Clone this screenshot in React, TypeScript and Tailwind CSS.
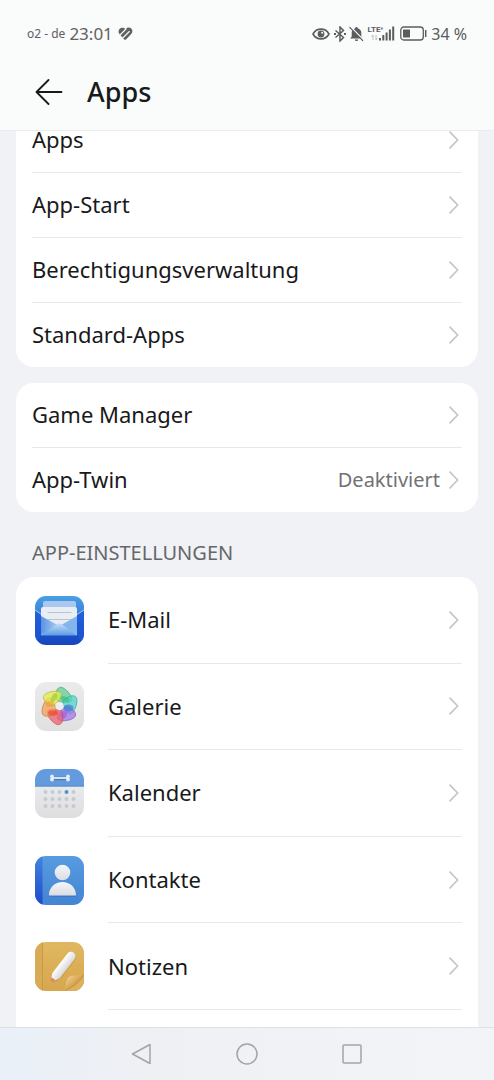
import type { ReactNode } from "react";

function Chevron() {
  return (
    <svg viewBox="0 0 10 18" className="h-[18px] w-[10px] shrink-0" fill="none" stroke="#c4c5c7" strokeWidth="1.7" strokeLinecap="round" strokeLinejoin="round" aria-hidden="true">
      <path d="M1 1.2 8.7 9 1 16.8" />
    </svg>
  );
}

function MailIcon() {
  return (
    <svg viewBox="0 0 49 49" className="size-[49px] shrink-0" aria-hidden="true">
      <defs>
        <linearGradient id="mailBg" x1="0" y1="0" x2="0" y2="1">
          <stop offset="0" stopColor="#4a9fe2" />
          <stop offset=".3" stopColor="#3c88e0" />
          <stop offset=".6" stopColor="#1d58d6" />
          <stop offset="1" stopColor="#1745bd" />
        </linearGradient>
        <linearGradient id="mailFront" x1="0" y1="0" x2="0" y2="1">
          <stop offset="0" stopColor="#c6e0f6" />
          <stop offset="1" stopColor="#5b9be4" />
        </linearGradient>
        <linearGradient id="mailSide" x1="0" y1="0" x2="1" y2="0">
          <stop offset="0" stopColor="#3f83e0" />
          <stop offset="1" stopColor="#a5cdf3" />
        </linearGradient>
        <clipPath id="mailClip"><rect width="49" height="49" rx="11" /></clipPath>
      </defs>
      <g clipPath="url(#mailClip)">
        <rect width="49" height="49" fill="url(#mailBg)" />
        <rect x="8" y="5" width="33" height="20" rx="2" fill="#a9c8ef" />
        <path d="M6 13a2 2 0 0 1 2-2h32a2 2 0 0 1 2 2v26H6z" fill="#e9edf4" />
        <path d="M12.5 16.500h24M12.5 23.500h24" stroke="#bcc3ce" strokeWidth="1" />
        <path d="M6 20 24.500 30 6 39z" fill="url(#mailSide)" opacity=".85" />
        <path d="M42 20 24.500 30 42 39z" fill="#6faae9" opacity=".85" />
        <path d="M6 39.500 22.500 28q2-1.500 4 0L42 39.500z" fill="url(#mailFront)" />
        <path d="M0 14l6 4.500V39L0 49zM49 14l-7 4.500V39l7 10z" fill="#1f58d5" opacity=".75" />
        <path d="M0 14 6 18M49 14l-7 4.500" stroke="#a5c9f5" strokeWidth="1" />
      </g>
    </svg>
  );
}

const petals = [
  { color: "#62cf91", edge: "#3da476", angle: 0 },
  { color: "#52d3c5", edge: "#35afa5", angle: 60 },
  { color: "#a775e7", edge: "#8460b7", angle: 120 },
  { color: "#f0606a", edge: "#c84d56", angle: 180 },
  { color: "#f3a05b", edge: "#cb813d", angle: 240 },
  { color: "#e2ec4a", edge: "#b7b93a", angle: 300 },
];

function GalleryIcon() {
  return (
    <svg viewBox="0 0 49 49" className="size-[49px] shrink-0" aria-hidden="true">
      <defs>
        <linearGradient id="galBg" x1="0" y1="0" x2="0" y2="1">
          <stop offset="0" stopColor="#ebebec" />
          <stop offset="1" stopColor="#e0e0e1" />
        </linearGradient>
      </defs>
      <rect width="49" height="49" rx="11" fill="url(#galBg)" />
      {petals.map((p) => (
        <path key={p.angle} transform={`rotate(${p.angle} 24.5 24)`} d="M21.5 17.500C20.500 12 21 8 23.500 6c2.500-2 6.500.5 9.500 4s5 7.500 3 9.500-9 1-12.500-.2z" fill={p.color} fillOpacity=".75" stroke={p.edge} strokeWidth=".7" />
      ))}
      <ellipse cx="19" cy="15.500" rx="2.500" ry="4.500" transform="rotate(25 19 15.500)" fill="#9ac52e" opacity=".6" />
      <ellipse cx="30" cy="17" rx="4.500" ry="2.500" transform="rotate(20 30 17)" fill="#35bd7a" opacity=".6" />
      <ellipse cx="33.500" cy="26" rx="5" ry="3.500" fill="#427bdc" opacity=".7" />
      <ellipse cx="29" cy="32.500" rx="3" ry="4" transform="rotate(20 29 32.500)" fill="#9b4fd4" opacity=".5" />
      <ellipse cx="18" cy="31" rx="5" ry="2.800" fill="#ed3f34" opacity=".65" />
      <ellipse cx="14.500" cy="22" rx="4" ry="3" fill="#ee982f" opacity=".5" />
      <path d="m24.500 19.500 4 2.300v4.400l-4 2.300-4-2.300v-4.400z" fill="#edf0ef" opacity=".85" />
    </svg>
  );
}

function CalendarIcon() {
  return (
    <svg viewBox="0 0 49 49" className="size-[49px] shrink-0" aria-hidden="true">
      <defs>
        <linearGradient id="calBg" x1="0" y1="0" x2="0" y2="1">
          <stop offset=".35" stopColor="#e9eaec" />
          <stop offset="1" stopColor="#dededf" />
        </linearGradient>
        <clipPath id="calClip"><rect width="49" height="49" rx="11" /></clipPath>
      </defs>
      <g clipPath="url(#calClip)">
        <rect width="49" height="49" fill="url(#calBg)" />
        <rect width="49" height="17.500" fill="#649bdf" />
        <rect y="16.500" width="49" height="1" fill="#588bc9" />
      </g>
      <path d="M17 9.500h16" stroke="#4d79ad" strokeWidth="3.500" />
      <circle cx="17" cy="7.500" r="1.900" fill="#e6edf6" /><circle cx="17" cy="10.500" r="1.900" fill="#e6edf6" />
      <circle cx="33" cy="7.500" r="1.900" fill="#e6edf6" /><circle cx="33" cy="10.500" r="1.900" fill="#e6edf6" />
      <path d="M17 9h16" stroke="#e6edf6" strokeWidth="1.800" />
      {[23, 30, 37].map((y) =>
        [10.5, 17.5, 24.5, 31.5, 38.5].map((x) => (
          <circle key={`${x}-${y}`} cx={x} cy={y} r="2" fill={x === 31.5 && y === 23 ? "#568fcd" : "#c5cad2"} />
        )),
      )}
    </svg>
  );
}

function ContactsIcon() {
  return (
    <svg viewBox="0 0 49 49" className="size-[49px] shrink-0" aria-hidden="true">
      <defs>
        <linearGradient id="conBg" x1="0" y1="0" x2="0" y2="1">
          <stop offset="0" stopColor="#579be0" />
          <stop offset="1" stopColor="#4484d3" />
        </linearGradient>
        <linearGradient id="conSpine" x1="0" y1="0" x2="0" y2="1">
          <stop offset="0" stopColor="#4186df" />
          <stop offset="1" stopColor="#1e49cd" />
        </linearGradient>
        <linearGradient id="conMan" x1="0" y1="0" x2="0" y2="1">
          <stop offset="0" stopColor="#f5f6f8" />
          <stop offset="1" stopColor="#dadde3" />
        </linearGradient>
        <clipPath id="conClip"><rect width="49" height="49" rx="11" /></clipPath>
      </defs>
      <g clipPath="url(#conClip)">
        <rect width="49" height="49" fill="url(#conBg)" />
        <rect width="7.500" height="49" fill="url(#conSpine)" />
        <path d="M14 39.500h27v1.500H14z" fill="#3569b4" opacity=".5" />
      </g>
      <circle cx="27.500" cy="16.500" r="7.800" fill="url(#conMan)" />
      <path d="M14.500 39.500c-.5 0-.7-.4-.6-1C14.500 31 20 26 27.500 26s13 5 13.500 12.500c0 .6-.2 1-.7 1z" fill="url(#conMan)" />
    </svg>
  );
}

function NotesIcon() {
  return (
    <svg viewBox="0 0 49 49" className="size-[49px] shrink-0" aria-hidden="true">
      <defs>
        <linearGradient id="noteBg" x1="0" y1="0" x2="0" y2="1">
          <stop offset="0" stopColor="#e0b760" />
          <stop offset="1" stopColor="#d7a74e" />
        </linearGradient>
        <linearGradient id="noteFold" x1="0" y1="0" x2="1" y2="1">
          <stop offset=".1" stopColor="#f5d495" />
          <stop offset=".6" stopColor="#d09a47" />
        </linearGradient>
        <linearGradient id="notePen" x1="0" y1="0" x2="1" y2="0">
          <stop offset="0" stopColor="#ffffff" />
          <stop offset="1" stopColor="#d8d8dc" />
        </linearGradient>
        <clipPath id="noteClip"><rect width="49" height="49" rx="11" /></clipPath>
      </defs>
      <g clipPath="url(#noteClip)">
        <rect width="49" height="49" fill="url(#noteBg)" />
        <rect width="7" height="49" fill="#d9ab55" />
        <path d="M7.500 0v49" stroke="#c89a47" strokeWidth="1" />
        <path d="M30 49c1-3 0-9 3-13 3-4 9-1 16-4v17z" fill="url(#noteFold)" />
        <path d="M30 49C36 46 44 41 49 33v16z" fill="#dcb05d" />
        <path d="M30 48.500C36 46 44 41 48.500 33" stroke="#c08a3c" strokeWidth=".8" fill="none" />
      </g>
      <g transform="translate(-.5 1.5) rotate(38 27 25)">
        <path d="M24 10a4.500 4.500 0 0 1 9 0V33l-3.200 8.500h-1.600L24 33z" fill="#bd8e3d" opacity=".35" />
        <path d="M22.500 9.500a4.500 4.500 0 0 1 9 0v23q0 2-1 3.500l-2.700 5h-1.600L23.500 36q-1-1.500-1-3.500z" fill="url(#notePen)" />
        <path d="m24.500 38 1.500 3.300h2l1.500-3.300z" fill="#dc8569" />
      </g>
    </svg>
  );
}

function StatusIcons() {
  return (
    <div className="flex items-center text-[#5b5c5e]">
      <svg viewBox="0 0 18 14" className="h-[14px] w-[18px]" fill="none" stroke="currentColor" role="img" aria-label="Augenschonung">
        <path d="M1 7c3.500-6.500 12.500-6.500 16 0-3.500 6.500-12.500 6.500-16 0z" strokeWidth="1.600" />
        <circle cx="9" cy="7" r="3.400" fill="currentColor" stroke="none" />
        <circle cx="10.200" cy="5.800" r="1" fill="#fafbfb" stroke="none" />
      </svg>
      <svg viewBox="0 0 14 16" className="ml-[3px] h-[16px] w-[14px]" fill="none" stroke="currentColor" strokeWidth="1.500" role="img" aria-label="Bluetooth">
        <path d="m2.500 4.500 8 7L7 15V1l3.500 3.500-8 7" />
        <path d="M1 8h2M11 8h2" strokeWidth="2" />
      </svg>
      <svg viewBox="0 0 15 16" className="ml-[2px] h-[16px] w-[15px]" role="img" aria-label="Stumm">
        <path d="M7.500 1c.8 0 1.200.5 1.200 1.200 2.300.6 3.600 2.300 3.600 4.600v3.700l1.500 2H1.200l1.500-2V6.800c0-2.300 1.300-4 3.600-4.600C6.300 1.500 6.700 1 7.500 1zM5.800 13.500h3.400c-.2 1-.8 1.500-1.700 1.500s-1.500-.5-1.700-1.500z" fill="currentColor" />
        <path d="m1.500.8 13 13.400" stroke="#fafbfb" strokeWidth="1.600" />
        <path d="m.5 1.200 13.500 13.600" stroke="currentColor" strokeWidth="1.200" />
      </svg>
      <div className="ml-[4px] flex flex-col items-end text-[8px] leading-[8px] font-bold">
        <span className="font-['Roboto',sans-serif]">LTE<sup className="text-[5px]">+</sup></span>
        <svg viewBox="0 0 7 7" className="mr-[5px] h-[7px] w-[7px]" fill="none" stroke="#bdbebf" aria-hidden="true">
          <path d="M2 6V1L.5 3M5 1v5l1.500-2" />
        </svg>
      </div>
      <svg viewBox="0 0 16 15" className="-ml-[4px] h-[15px] w-[16px]" fill="currentColor" role="img" aria-label="Signal">
        <rect y="12" width="2" height="2.500" /><rect x="3.300" y="9" width="2" height="5.500" /><rect x="6.600" y="6.500" width="2" height="8" /><rect x="9.900" y="3.500" width="2" height="11" /><rect x="13.200" y=".5" width="2" height="14" />
      </svg>
      <svg viewBox="0 0 27 15" className="ml-[5px] h-[15px] w-[27px]" fill="none" stroke="currentColor" role="img" aria-label="Akku">
        <rect x=".8" y="1" width="22.500" height="13" rx="3" strokeWidth="1.300" />
        <rect x="3" y="3.500" width="7" height="8" rx=".5" fill="currentColor" stroke="none" />
        <path d="M25.700 4v7" strokeWidth="1.500" />
      </svg>
      <span className="ml-[4px] text-[16px] leading-[20px]">34 %</span>
    </div>
  );
}

function SettingRow({ label, value, last = false }: { label: string; value?: string; last?: boolean }) {
  return (
    <a href="#" className={`flex items-center text-[22px] ${last ? "h-[64px]" : "h-[65px] border-b border-[#e7e8e9]"}`}>
      <span className="flex-1 pb-[2px]">{label}</span>
      {value && <span className="mr-[9px] text-[20px] text-[#717274]">{value}</span>}
      <span className="mr-[3px]"><Chevron /></span>
    </a>
  );
}

function AppRow({ label, icon }: { label: string; icon: ReactNode }) {
  return (
    <a href="#" className="flex items-stretch pl-[3px] text-[22px]">
      <span className="flex items-center">{icon}</span>
      <span className="ml-6 flex flex-1 items-center border-b border-[#e7e8e9]">
        <span className="flex-1">{label}</span>
        <span className="mr-[3px]"><Chevron /></span>
      </span>
    </a>
  );
}

const cardClass = "rounded-[18px] bg-white px-4";

export default function App() {
  return (
    <div className="flex h-screen flex-col overflow-hidden bg-[#f1f2f6] font-['Noto_Sans',sans-serif] text-[#18191b]">
      <header className="h-[131px] shrink-0 border-b border-[#ebeced] bg-[#fafbfb]">
        <div className="flex h-[67px] items-center justify-between px-[27px] text-[#5f6063]">
          <div className="flex items-center">
            <span className="text-[12px]">o2 - de</span>
            <span className="ml-[4px] text-[17px]">23:01</span>
            <svg viewBox="0 0 15 13" className="ml-[5px] h-[13px] w-[15px]" role="img" aria-label="Health">
              <path d="M7.500 2.200C9 .3 11.500 0 13.200 1.500c1.700 1.600 1.500 4 0 5.600L8 12.400c-.6.5-1.300.5-1.800 0L1.600 7.300C.2 5.500.2 3.200 1.700 1.700 3.400.2 6 .4 7.500 2.200z" fill="currentColor" />
              <path d="M1.500 8.500 8 2M4.800 11 11.300 4.500" stroke="#fafbfb" strokeWidth="1.100" strokeLinecap="round" />
            </svg>
          </div>
          <StatusIcons />
        </div>
        <div className="flex h-[50px] items-center pl-[35px]">
          <button type="button" aria-label="Zurück">
            <svg viewBox="0 0 28 26" className="h-[26px] w-[28px]" fill="none" stroke="#18191b" strokeWidth="1.800" strokeLinecap="round" strokeLinejoin="round" aria-hidden="true">
              <path d="M26.500 13H1.500M13.500 1 1.500 13l12 12" />
            </svg>
          </button>
          <h1 className="ml-6 text-[27px] font-medium">Apps</h1>
        </div>
      </header>

      <main className="min-h-0 flex-1 overflow-hidden px-4">
        <section className={`${cardClass} -mt-[23px]`}>
          <SettingRow label="Apps" />
          <SettingRow label="App-Start" />
          <SettingRow label="Berechtigungsverwaltung" />
          <SettingRow label="Standard-Apps" last />
        </section>
        <section className={`${cardClass} mt-4`}>
          <SettingRow label="Game Manager" />
          <SettingRow label="App-Twin" value="Deaktiviert" last />
        </section>
        <h2 className="mt-[27px] mb-[10px] pl-4 text-[20px] leading-[28px] text-[#66676a]">APP-EINSTELLUNGEN</h2>
        <section className={cardClass}>
          <div className="grid h-[433px] grid-rows-5">
            <AppRow label="E-Mail" icon={<MailIcon />} />
            <AppRow label="Galerie" icon={<GalleryIcon />} />
            <AppRow label="Kalender" icon={<CalendarIcon />} />
            <AppRow label="Kontakte" icon={<ContactsIcon />} />
            <AppRow label="Notizen" icon={<NotesIcon />} />
          </div>
          <div className="h-[86px]" />
        </section>
      </main>

      <nav className="flex h-[53px] shrink-0 items-center justify-center gap-[84px] border-t border-[#dfe2e5] bg-linear-to-r from-[#e9f0f8] via-[#eff0f4] via-30% to-[#f3f4f8] pr-[2px]">
        <button type="button" aria-label="Zurück">
          <svg viewBox="0 0 21 22" className="h-[22px] w-[21px]" fill="none" stroke="#a3a4a8" strokeWidth="1.500" strokeLinejoin="round" aria-hidden="true">
            <path d="M19 1.500v19L1.500 11z" />
          </svg>
        </button>
        <button type="button" aria-label="Startseite">
          <svg viewBox="0 0 22 22" className="h-[22px] w-[22px]" fill="none" stroke="#a3a4a8" strokeWidth="1.500" aria-hidden="true">
            <circle cx="11" cy="11" r="10" />
          </svg>
        </button>
        <button type="button" aria-label="Letzte Apps">
          <svg viewBox="0 0 20 20" className="h-[20px] w-[20px]" fill="none" stroke="#a3a4a8" strokeWidth="1.500" aria-hidden="true">
            <rect x="1" y="1" width="18" height="18" rx="1" />
          </svg>
        </button>
      </nav>
    </div>
  );
}
